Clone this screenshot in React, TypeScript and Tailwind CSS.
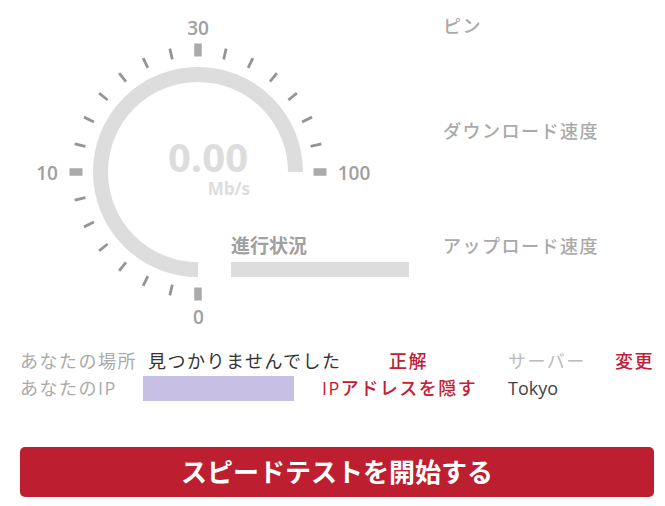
import React from "react";

const CX = 198;
const CY = 172;

function Gauge() {
  const ticks = [];
  for (let i = 0; i <= 21; i++) {
    const a = ((90 + (i * 270) / 21) * Math.PI) / 180;
    const major = i % 7 === 0;
    const r1 = 115.5;
    const r2 = major ? 128.5 : 126.5;
    ticks.push(
      <line
        key={i}
        x1={CX + r1 * Math.cos(a)}
        y1={CY + r1 * Math.sin(a)}
        x2={CX + r2 * Math.cos(a)}
        y2={CY + r2 * Math.sin(a)}
        stroke={major ? "#aaaaaa" : "#959595"}
        strokeWidth={major ? 7.5 : 2.8}
        strokeLinecap="butt"
      />
    );
  }
  return (
    <svg width="425" height="340" viewBox="0 0 425 340" className="block">
      <path
        d={`M ${CX} ${CY + 97.5} A 97.5 97.5 0 1 1 ${CX + 97.5} ${CY}`}
        fill="none"
        stroke="#dddddd"
        strokeWidth="15"
        strokeLinecap="butt"
      />
      {ticks}
      <g fontFamily="'Open Sans', 'Liberation Sans', sans-serif" fontWeight="600" fontSize="19" fill="#a0a0a0">
        <text x="198" y="35" textAnchor="middle">30</text>
        <text x="47" y="180" textAnchor="middle">10</text>
        <text x="354" y="180" textAnchor="middle">100</text>
        <text x="198.5" y="324" textAnchor="middle">0</text>
      </g>
      <text
        x="208"
        y="172"
        textAnchor="middle"
        fontFamily="'Open Sans', 'Liberation Sans', sans-serif"
        fontWeight="700"
        fontSize="40"
        fill="#dddddd"
      >
        0.00
      </text>
      <text
        x="250"
        y="195"
        textAnchor="end"
        fontFamily="'Open Sans', 'Liberation Sans', sans-serif"
        fontWeight="700"
        fontSize="17"
        fill="#dddddd"
      >
        Mb/s
      </text>
    </svg>
  );
}

export default function App() {
  return (
    <div
      className="w-[665px] h-[506px] bg-white overflow-hidden"
      style={{ fontFamily: "'Open Sans', 'Noto Sans CJK JP', sans-serif" }}
    >
      <div className="flex h-[340px]">
        <div className="relative w-[443px] h-[340px]">
          <Gauge />
          <div className="absolute left-[231px] top-[234px] w-[178px]">
            <div className="h-[24px] leading-[24px] text-[19px] font-bold text-[#a0a0a0]">進行状況</div>
            <div className="mt-[4px] h-[15px] bg-[#dddddd]" />
          </div>
        </div>
        <div className="flex flex-col text-[18px] tracking-[1.5px] leading-[24px] text-[#aaaaaa] font-medium whitespace-nowrap">
          <div className="mt-[14px]">ピン</div>
          <div className="mt-[81px]">ダウンロード速度</div>
          <div className="mt-[91px]">アップロード速度</div>
        </div>
      </div>

      <div className="mt-[9px] pl-[20px] text-[18px] tracking-[1.5px] leading-[25px] whitespace-nowrap">
        <div className="flex h-[25px] items-center">
          <div className="w-[128px] shrink-0 text-[#aaaaaa]">あなたの場所</div>
          <div className="w-[241px] shrink-0 text-[#333333]">見つかりませんでした</div>
          <div className="w-[119px] shrink-0 text-[#c22034] font-medium">正解</div>
          <div className="w-[107px] shrink-0 text-[#bbbbbb]">サーバー</div>
          <div className="shrink-0 text-[#c22034] font-medium">変更</div>
        </div>
        <div className="flex h-[25px] items-center mt-[2px]">
          <div className="w-[123px] shrink-0 text-[#aaaaaa]">あなたのIP</div>
          <div className="w-[151px] shrink-0 h-[25px] bg-[#c7c0e4]" />
          <div className="ml-[28px] w-[186px] shrink-0 text-[#c22034] font-medium">IPアドレスを隠す</div>
          <div className="shrink-0 text-[#444444] tracking-normal">Tokyo</div>
        </div>
      </div>

      <div className="pl-[20px] mt-[46px] pr-[11px]">
        <button className="w-full h-[50px] rounded-[5px] bg-[#bd1f31] text-white text-[26px] font-bold flex items-center justify-center">
          スピードテストを開始する
        </button>
      </div>
    </div>
  );
}
